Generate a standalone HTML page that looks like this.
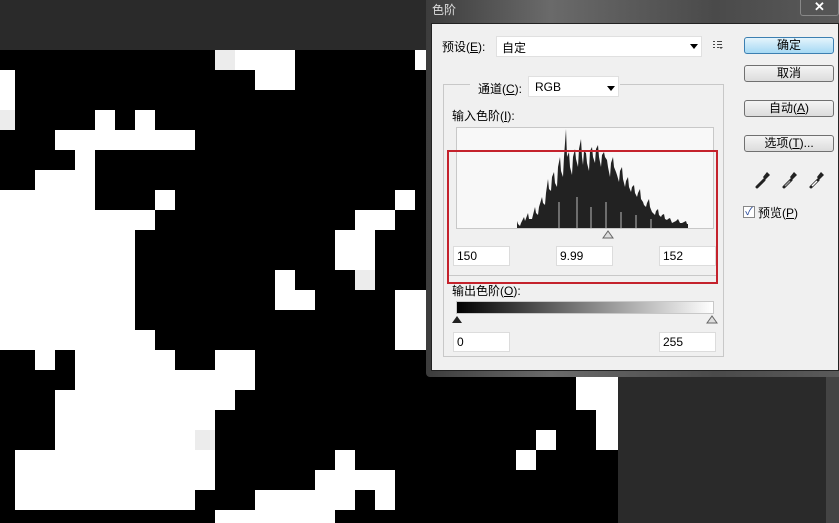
<!DOCTYPE html>
<html><head><meta charset="utf-8"><style>
*{margin:0;padding:0;box-sizing:border-box}
body{width:839px;height:523px;overflow:hidden;background:#2a2a2a;position:relative;font-family:"Liberation Sans","Noto Sans CJK SC",sans-serif;font-size:12px;color:#000}
.a{position:absolute}
.w{position:absolute;background:#fff}
.g{position:absolute;background:#ececec}
.btn{position:absolute;left:744px;width:90px;height:17px;border:1px solid #707070;border-radius:3px;background:linear-gradient(#f4f4f4,#dcdcdc);text-align:center;line-height:15px;font-size:12px}
.inp{position:absolute;height:20px;background:#fff;border:1px solid #dcdcdc;line-height:18px;padding-left:3px;font-size:12px}
</style></head><body>
<div class="a" style="left:0;top:50px;width:430px;height:473px;background:#000"></div>
<div class="g" style="left:215px;top:50px;width:20px;height:20px"></div>
<div class="w" style="left:235px;top:50px;width:60px;height:20px"></div>
<div class="w" style="left:415px;top:50px;width:12px;height:20px"></div>
<div class="w" style="left:0;top:70px;width:15px;height:40px"></div>
<div class="w" style="left:255px;top:70px;width:40px;height:20px"></div>
<div class="g" style="left:0;top:110px;width:15px;height:20px"></div>
<div class="w" style="left:95px;top:110px;width:20px;height:20px"></div>
<div class="w" style="left:135px;top:110px;width:20px;height:20px"></div>
<div class="w" style="left:55px;top:130px;width:140px;height:20px"></div>
<div class="w" style="left:75px;top:150px;width:20px;height:20px"></div>
<div class="w" style="left:35px;top:170px;width:60px;height:20px"></div>
<div class="w" style="left:0;top:190px;width:95px;height:20px"></div>
<div class="w" style="left:155px;top:190px;width:20px;height:20px"></div>
<div class="w" style="left:395px;top:190px;width:20px;height:20px"></div>
<div class="w" style="left:0;top:210px;width:155px;height:20px"></div>
<div class="w" style="left:355px;top:210px;width:40px;height:20px"></div>
<div class="w" style="left:0;top:230px;width:135px;height:100px"></div>
<div class="w" style="left:335px;top:230px;width:40px;height:40px"></div>
<div class="w" style="left:275px;top:270px;width:20px;height:40px"></div>
<div class="g" style="left:355px;top:270px;width:20px;height:20px"></div>
<div class="w" style="left:295px;top:290px;width:20px;height:20px"></div>
<div class="w" style="left:395px;top:290px;width:32px;height:60px"></div>
<div class="w" style="left:0;top:330px;width:155px;height:20px"></div>
<div class="w" style="left:35px;top:350px;width:20px;height:20px"></div>
<div class="w" style="left:75px;top:350px;width:100px;height:20px"></div>
<div class="w" style="left:215px;top:350px;width:40px;height:20px"></div>
<div class="w" style="left:75px;top:370px;width:180px;height:20px"></div>
<div class="w" style="left:55px;top:390px;width:180px;height:20px"></div>
<div class="w" style="left:55px;top:410px;width:160px;height:40px"></div>
<div class="g" style="left:195px;top:430px;width:20px;height:20px"></div>
<div class="w" style="left:15px;top:450px;width:200px;height:40px"></div>
<div class="w" style="left:335px;top:450px;width:20px;height:20px"></div>
<div class="w" style="left:315px;top:470px;width:80px;height:20px"></div>
<div class="w" style="left:15px;top:490px;width:180px;height:20px"></div>
<div class="w" style="left:255px;top:490px;width:100px;height:20px"></div>
<div class="w" style="left:375px;top:490px;width:20px;height:20px"></div>
<div class="w" style="left:215px;top:510px;width:120px;height:13px"></div>
<div class="a" style="left:426px;top:375px;width:192px;height:148px;background:#000"></div>
<div class="w" style="left:576px;top:376px;width:42px;height:34px"></div>
<div class="w" style="left:596px;top:410px;width:22px;height:40px"></div>
<div class="w" style="left:536px;top:430px;width:20px;height:20px"></div>
<div class="w" style="left:516px;top:450px;width:20px;height:20px"></div>
<div class="a" style="left:826px;top:375px;width:13px;height:148px;background:#444"></div>
<div class="a" style="left:426px;top:0;width:413px;height:377px;background:linear-gradient(90deg,#3c3c3c,#6a6a6a 30%,#4a4a4a 70%,#5a5a5a);border-radius:0 0 0 4px"></div>
<div class="a" style="left:432px;top:1px;color:#ddd;font-size:12px">色阶</div>
<div class="a" style="left:800px;top:0;width:39px;height:16px;border:1px solid #888;border-top:none;border-radius:0 0 3px 3px;background:#555;color:#fff;text-align:center;line-height:14px;font-size:13px;font-weight:bold">✕</div>
<div class="a" style="left:431px;top:23px;width:408px;height:348px;background:#f0f0f0;border:1px solid #222"></div>
<div class="a" style="left:442px;top:38px">预设(<u>E</u>):</div>
<div class="a" style="left:496px;top:36px;width:206px;height:21px;background:#fff;border:1px solid #e0e0e0;padding:2px 5px">自定</div>
<div class="a" style="left:690px;top:44px;width:0;height:0;border-left:4px solid transparent;border-right:4px solid transparent;border-top:5px solid #000"></div>
<svg class="a" style="left:712px;top:40px" width="12" height="10"><g stroke="#444" stroke-width="1"><path d="M1 1.5H3M5 1.5H10M1 4.5H3M5 4.5H10M1 7.5H3M5 7.5H7"/></g><path d="M7 7L11 7L9 9Z" fill="#444"/></svg>
<div class="btn" style="top:37px;background:linear-gradient(#e4f4fc,#a6d9f4);border-color:#3c7fb1">确定</div>
<div class="btn" style="top:65px">取消</div>
<div class="btn" style="top:100px">自动(<u>A</u>)</div>
<div class="btn" style="top:135px">选项(<u>T</u>)...</div>
<svg class="a" style="left:752px;top:168px" width="80" height="22">
<g stroke="#222" stroke-width="3" fill="none" stroke-linecap="round"><path d="M5 19 L12 12"/><path d="M32 19 L39 12"/><path d="M59 19 L66 12"/></g>
<path d="M33 18 L38 13" stroke="#999" stroke-width="1.5"/><path d="M60 18 L65 13" stroke="#fff" stroke-width="1.5"/>
<g fill="#222"><path d="M11 9L15 4L18 7L13 12Z"/><path d="M38 9L42 4L45 7L40 12Z"/><path d="M65 9L69 4L72 7L67 12Z"/></g>
</svg>
<div class="a" style="left:743px;top:206px;width:12px;height:12px;border:1px solid #888;background:#fff;font-size:11px;line-height:10px;color:#2a4a9a;text-align:center">✓</div>
<div class="a" style="left:758px;top:204px">预览(<u>P</u>)</div>
<div class="a" style="left:443px;top:84px;width:281px;height:273px;border:1px solid #c8c8c8"></div>
<div class="a" style="left:470px;top:78px;width:150px;height:20px;background:#f0f0f0"></div>
<div class="a" style="left:478px;top:80px">通道(<u>C</u>):</div>
<div class="a" style="left:528px;top:76px;width:91px;height:21px;background:#fff;border:1px solid #e0e0e0;padding:3px 6px">RGB</div>
<div class="a" style="left:607px;top:86px;width:0;height:0;border-left:4px solid transparent;border-right:4px solid transparent;border-top:5px solid #000"></div>
<div class="a" style="left:452px;top:107px">输入色阶(<u>I</u>):</div>
<div class="a" style="left:456px;top:127px;width:258px;height:102px;background:#f8f8f8;border:1px solid #c8c8c8"></div>
<svg class="a" style="left:456px;top:127px" width="258" height="102">
<polygon fill="#222" points="61,101 61,94 62,97 64,99 65,96 68,90 69,94 72,86 73,92 76,92 77,88 79,80 80,86 82,88 83,80 86,70 87,76 89,78 90,66 92,52 93,62 95,64 96,50 98,45 99,56 101,60 102,40 104,30 105,44 107,50 108,30 110,2 111,30 113,25 114,40 116,48 117,30 119,22 120,32 122,40 123,22 125,12 126,30 127,38 128,24 130,26 131,36 133,44 134,24 136,20 137,30 139,36 140,22 142,18 143,30 145,40 146,28 148,25 149,30 151,33 152,40 154,50 155,36 157,30 158,40 160,45 161,48 163,55 164,44 166,40 167,52 169,60 170,54 172,50 173,60 175,65 176,60 178,58 179,66 181,70 182,66 184,62 185,72 187,75 188,78 190,80 191,76 193,72 194,80 196,85 197,86 199,88 200,84 202,82 203,88 205,90 206,88 208,87 209,92 211,93 212,92 214,91 216,96 218,95 220,94 222,92 224,96 226,96 228,95 230,94 231,97 232,97 232,101"/>
<g stroke="#f8f8f8" stroke-width="0.7"><path d="M103 101V75M121 101V70M135 101V80M150 101V75M165 101V85M180 101V88M195 101V92"/></g>
</svg>
<svg class="a" style="left:601px;top:228px" width="14" height="12"><path d="M2 10 L7 3 L12 10Z" fill="#ddd" stroke="#666"/></svg>
<div class="inp" style="left:453px;top:246px;width:57px">150</div>
<div class="inp" style="left:556px;top:246px;width:57px">9.99</div>
<div class="inp" style="left:659px;top:246px;width:57px">152</div>
<div class="a" style="left:447px;top:275px;width:270px;height:1px;background:#c8c8c8"></div>
<div class="a" style="left:447px;top:150px;width:271px;height:134px;border:2px solid #c4222c"></div>
<div class="a" style="left:452px;top:282px">输出色阶(<u>O</u>):</div>
<div class="a" style="left:456px;top:301px;width:258px;height:13px;border:1px solid #c8c8c8;background:linear-gradient(90deg,#000,#fff)"></div>
<svg class="a" style="left:450px;top:313px" width="270" height="12"><path d="M2 10 L7 3 L12 10Z" fill="#222"/><path d="M257 10 L262 3 L267 10Z" fill="#ddd" stroke="#666"/></svg>
<div class="inp" style="left:453px;top:332px;width:57px">0</div>
<div class="inp" style="left:659px;top:332px;width:57px">255</div>
</body></html>
